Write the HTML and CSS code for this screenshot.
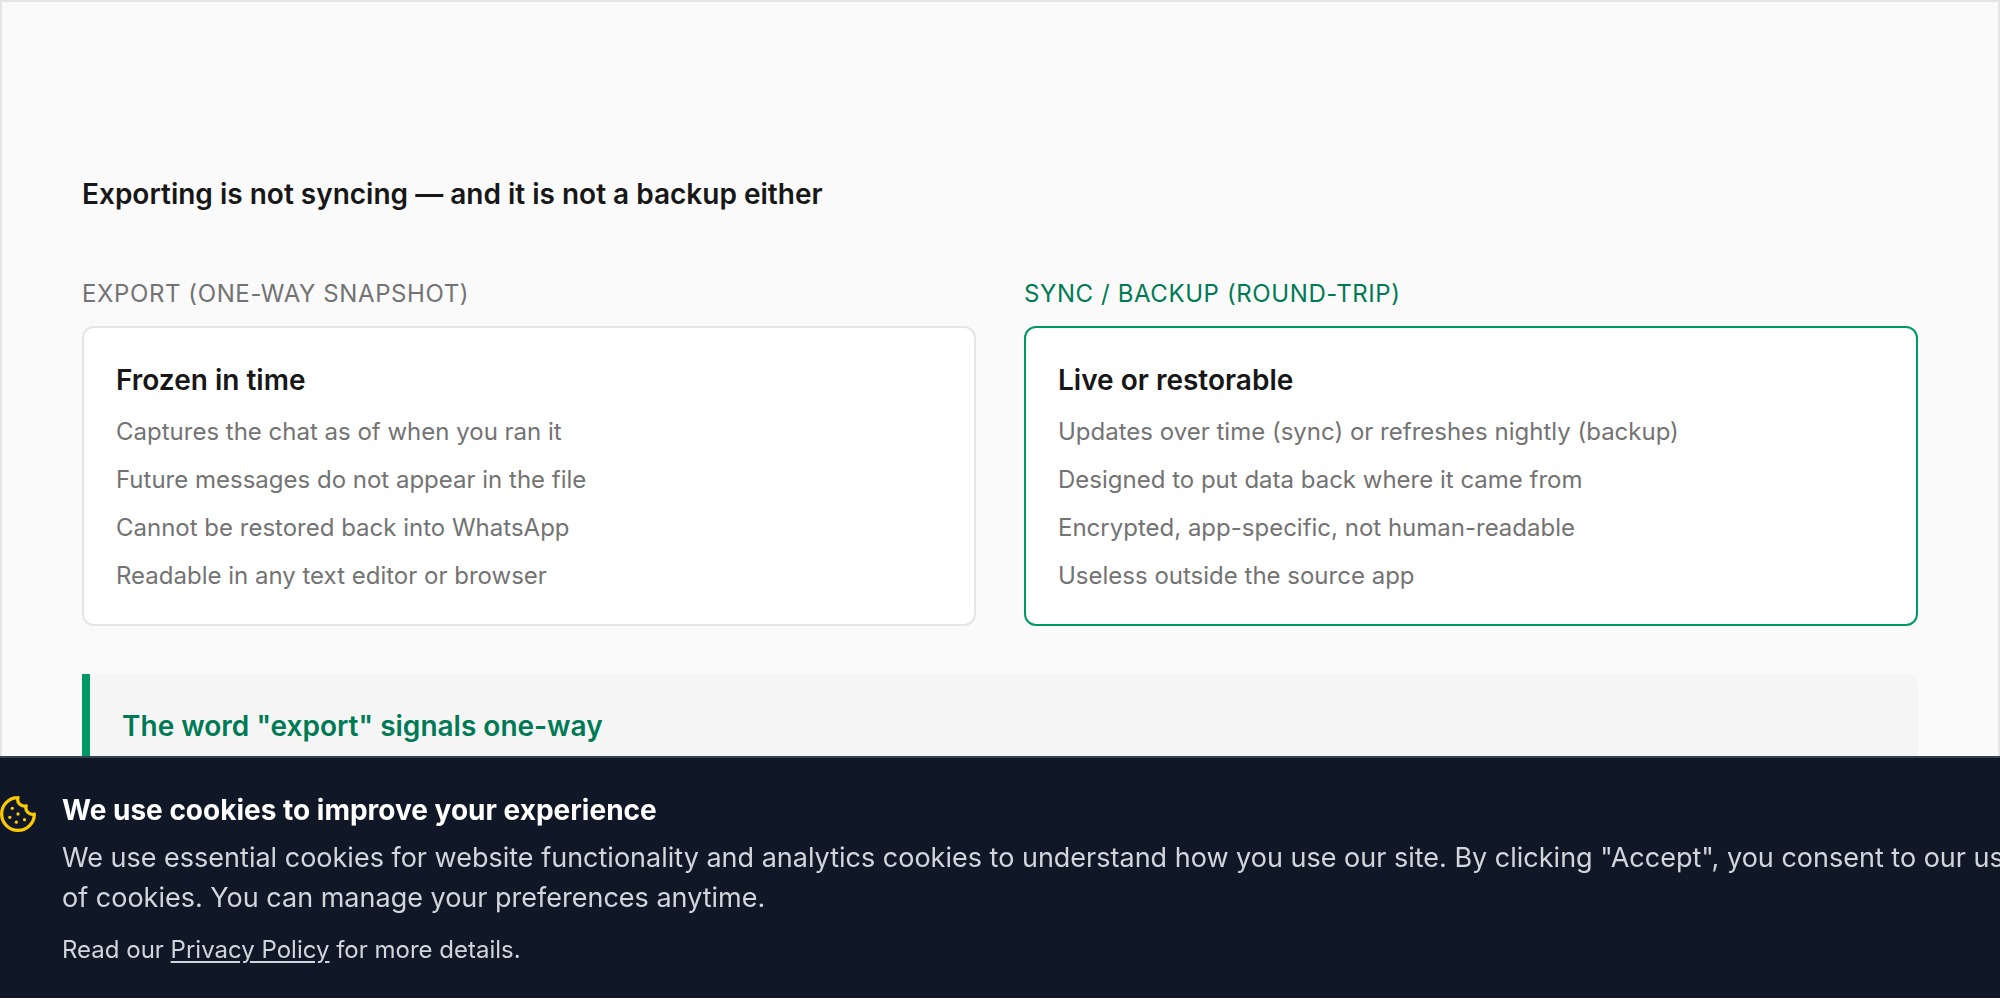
FILE: index.html
```html
<!DOCTYPE html>
<html lang="en">

    <head>
        <title>Exporting is not syncing</title>
        <meta charset="UTF-8">
        <meta name="viewport" content="width=device-width, initial-scale=1.0">
        <link rel="stylesheet" href="styles.css">
    </head>

    <body>
        <main class="figure">
            <h2 class="figure-title">Exporting is not syncing — and it is not a backup either</h2>

            <div class="compare">
                <section class="column">
                    <p class="label">Export (one-way snapshot)</p>
                    <div class="card">
                        <h3 class="card-title">Frozen in time</h3>
                        <ul class="points">
                            <li>Captures the chat as of when you ran it</li>
                            <li>Future messages do not appear in the file</li>
                            <li>Cannot be restored back into WhatsApp</li>
                            <li>Readable in any text editor or browser</li>
                        </ul>
                    </div>
                </section>

                <section class="column accent">
                    <p class="label">Sync / backup (round-trip)</p>
                    <div class="card">
                        <h3 class="card-title">Live or restorable</h3>
                        <ul class="points">
                            <li>Updates over time (sync) or refreshes nightly (backup)</li>
                            <li>Designed to put data back where it came from</li>
                            <li>Encrypted, app-specific, not human-readable</li>
                            <li>Useless outside the source app</li>
                        </ul>
                    </div>
                </section>
            </div>

            <aside class="callout">
                <h3 class="callout-title">The word "export" signals one-way</h3>
            </aside>
        </main>

        <!-- Cookie banner, stays on the bottom of the window -->
        <div class="cookie-banner" role="region" aria-label="Cookies">
            <svg class="cookie-icon" viewBox="1 1 22 22" fill="none" stroke="currentColor" stroke-width="2"
                stroke-linecap="round" stroke-linejoin="round" aria-hidden="true">
                <path d="M12 2a10 10 0 1 0 10 10 4 4 0 0 1-5-5 4 4 0 0 1-5-5" />
                <path d="M8.5 8.5v.01" />
                <path d="M16 15.5v.01" />
                <path d="M12 12v.01" />
                <path d="M11 17v.01" />
                <path d="M7 14v.01" />
            </svg>
            <div class="cookie-body">
                <h3 class="cookie-title">We use cookies to improve your experience</h3>
                <p class="cookie-text">We use essential cookies for website functionality and analytics cookies to understand how you use our site. By clicking "Accept", you consent to our use<br>of cookies. You can manage your preferences anytime.</p>
                <p class="cookie-more">Read our <a href="#">Privacy Policy</a> for more details.</p>
            </div>
        </div>
    </body>

</html>
```
FILE: styles.css
```css
* {
    margin: 0;
    padding: 0;
    box-sizing: border-box;
}

body {
    height: 100vh;
    overflow: hidden;
    background: #fff;
    font-family: Inter, "Liberation Sans", sans-serif;
    color: #171717;
}

.figure {
    min-height: 100vh;
    padding: 172px 80px 80px;
    border: 2px solid #e5e5e5;
    background: #fafafa;
}

.figure-title,
.card-title,
.callout-title {
    font-size: 28px;
    font-weight: 600;
    line-height: 40px;
}

.compare {
    display: grid;
    grid-template-columns: 1fr 1fr;
    gap: 48px;
    margin-top: 60px;
}

.label {
    margin-bottom: 12px;
    font-size: 24px;
    line-height: 40px;
    letter-spacing: 0.025em;
    text-transform: uppercase;
    color: #737373;
}

.card {
    padding: 32px 32px 30px;
    border: 2px solid #e5e5e5;
    border-radius: 12px;
    background: #fff;
}

.accent .label {
    color: #007a55;
}

.accent .card {
    border-color: #009966;
}

.points {
    display: grid;
    gap: 12px;
    margin-top: 14px;
    list-style: none;
    font-size: 24px;
    line-height: 36px;
    color: #737373;
}

.callout {
    min-height: 200px;
    margin-top: 48px;
    padding: 32px;
    border-left: 8px solid #009966;
    border-radius: 0 12px 12px 0;
    background: #f5f5f5;
}

.callout-title {
    color: #007a55;
}

.cookie-banner {
    position: fixed;
    left: 0;
    right: 0;
    bottom: 2px;
    display: flex;
    gap: 26px;
    padding: 32px 0;
    border-top: 2px solid #364153;
    background: #101828;
    color: #d1d5dc;
    box-shadow: 0 2px 0 #fff;
}

.cookie-icon {
    flex: none;
    width: 36px;
    height: 36px;
    margin-top: 6px;
    color: #fcc800;
}

.cookie-title {
    font-size: 28px;
    font-weight: 700;
    line-height: 40px;
    color: #fff;
}

.cookie-text {
    margin-top: 8px;
    font-size: 27px;
    line-height: 40px;
    white-space: nowrap;
}

.cookie-more {
    margin-top: 16px;
    font-size: 24px;
    line-height: 32px;
}

.cookie-more a {
    color: inherit;
    text-underline-offset: 3px;
}
```
